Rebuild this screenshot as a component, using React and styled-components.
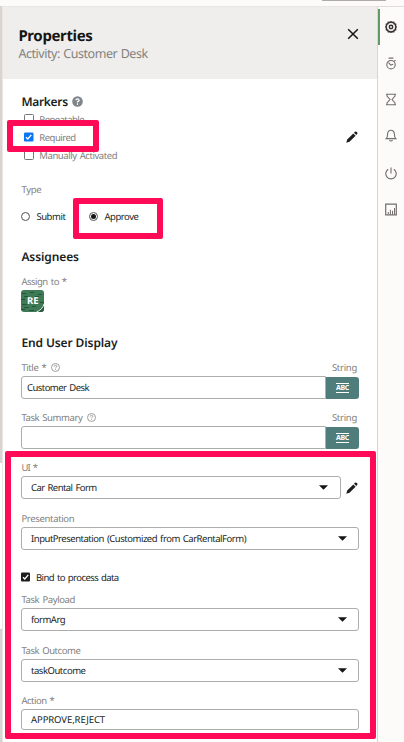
import React from "react";
import styled, { createGlobalStyle } from "styled-components";

const Global = createGlobalStyle`
  *, *::before, *::after { box-sizing: border-box; }
  body { margin: 0; overflow: hidden; background: #fcfbfa; }
  svg { display: block; flex: none; }
  button { font-family: inherit; }
`;

const Page = styled.div`
  position: relative;
  display: flex;
  flex-direction: column;
  width: 404px;
  height: 742px;
  overflow: hidden;
  font-family: "Noto Sans", sans-serif;
  font-size: 9.5px;
  color: #201e1c;
  text-rendering: geometricPrecision;
`;
const TopStrip = styled.div`
  display: flex;
  flex: none;
  height: 6px;
  padding-left: 322px;
  background: #fcfbfa;
`;
const TopLine = styled.div`
  width: 64px;
  height: 1px;
  background: #aeaba8;
`;
const Main = styled.div`
  display: flex;
  flex: 1;
  min-height: 0;
`;
const Gutter = styled.div`
  display: flex;
  flex-direction: column;
  flex: none;
  width: 3px;
  background: #d9d4d0;
  border-right: 1px solid #e9e6e4;
`;
const GutterGap = styled.div`
  height: 167px;
  margin-top: 457px;
  background: #fff;
  border-bottom: 1px solid #d0cdca;
`;
const Panel = styled.main`
  width: 374px;
  background: #fff;
`;
const Header = styled.header`
  display: flex;
  justify-content: space-between;
  height: 73px;
  padding: 20px 18px 0 15.4px;
  background: #efeeec;
  border-top: 1px solid #e8e6e3;
`;
const Title = styled.h1`
  margin: 0;
  font-size: 15px;
  font-weight: 700;
  line-height: 18px;
  letter-spacing: -0.37px;
  color: #161513;
`;
const Subtitle = styled.div`
  font-size: 12.5px;
  line-height: 18px;
  letter-spacing: -0.45px;
  word-spacing: 0.6px;
  color: #83817e;
`;
const CloseButton = styled.button`
  display: flex;
  width: 12px;
  height: 12px;
  margin: 1px 0 0;
  padding: 0;
  border: 0;
  background: none;
`;
const Form = styled.form`
  display: flex;
  flex-direction: column;
  padding: 13px 18px 0;
`;
const SectionTitle = styled.h2`
  display: flex;
  align-items: center;
  gap: 4px;
  height: 18px;
  margin: ${(p) => p.$top || 0}px 0 0;
  padding-left: 0.4px;
  font-size: 12px;
  font-weight: 600;
  letter-spacing: ${(p) => p.$track || 0}px;
  white-space: nowrap;
`;
const Label = styled.span`
  letter-spacing: ${(p) => p.$track || 0}px;
  word-spacing: 1px;
  color: ${(p) => (p.$dark ? "#201e1c" : "#82807d")};
  white-space: nowrap;
`;
const LabelRow = styled.div`
  display: flex;
  align-items: center;
  gap: 5px;
  height: 18px;
  margin-top: ${(p) => p.$top || 0}px;
  padding-left: 0.4px;
`;
const TypeName = styled(Label)`
  margin-left: auto;
  padding-right: 2px;
`;
const Markers = styled.div`
  display: flex;
  align-items: center;
  justify-content: space-between;
`;
const OptionRow = styled.div`
  display: flex;
  align-items: center;
  gap: ${(p) => p.$gap || 6}px;
  height: 18px;
  padding-left: ${(p) => p.$indent || 0}px;
  margin-top: ${(p) => p.$top || 0}px;
`;
const Radios = styled.div`
  display: flex;
  height: 20px;
  margin-top: 8px;
  padding-left: 0.4px;
`;
const RadioOption = styled.label`
  display: flex;
  align-items: center;
  gap: 6px;
  width: 68px;
`;
const Radio = styled.span`
  display: grid;
  place-items: center;
  width: 9px;
  height: 9px;
  border: 1px solid #55524f;
  border-radius: 50%;
  &::after {
    content: "";
    width: 5px;
    height: 5px;
    border-radius: 50%;
    background: ${(p) => (p.$on ? "#161513" : "transparent")};
  }
`;
const Avatar = styled.div`
  display: flex;
  width: 23px;
  height: 22px;
  border-radius: 3px;
  overflow: hidden;
`;
const FieldRow = styled.div`
  display: flex;
  align-items: center;
`;
const Box = styled.div`
  display: flex;
  align-items: center;
  justify-content: space-between;
  flex: none;
  width: ${(p) => p.$width || 338}px;
  height: ${(p) => p.$height || 23}px;
  padding: 0 ${(p) => p.$padRight || 11}px 1px ${(p) => p.$pad || 9}px;
  border: 1px solid #afadab;
  border-radius: ${(p) => (p.$joined ? "3px 0 0 3px" : "3px")};
  background: #fff;
`;
const AbcButton = styled.button`
  display: grid;
  place-items: center;
  width: 33px;
  height: 22px;
  padding: 0;
  border: 0;
  border-radius: 0 3px 3px 0;
  background: #4f7d7b;
`;
const AbcText = styled.span`
  border-top: 1px solid #fff;
  border-bottom: 1px solid #fff;
  color: #fff;
  font-size: 7px;
  font-weight: 700;
  line-height: 8px;
  letter-spacing: -0.35px;
`;
const PencilSlot = styled.span`
  margin-left: ${(p) => p.$left || 0}px;
  margin-right: ${(p) => p.$right || 0}px;
  margin-bottom: ${(p) => p.$bottom || 0}px;
`;
const Rail = styled.nav`
  display: flex;
  flex-direction: column;
  flex: none;
  width: 27px;
  padding-top: 2px;
  border-top: 1px solid #dfdcd9;
  border-left: 1px solid #d8d5d2;
  background: #fcfbfa;
`;
const RailItem = styled.button`
  display: flex;
  align-items: center;
  flex: none;
  height: 36px;
  margin-top: ${(p) => p.$gap || 0}px;
  padding: 0 0 0 ${(p) => (p.$active ? 5 : 7)}px;
  border: 0;
  border-left: ${(p) => (p.$active ? "2px solid #5f9b62" : "0")};
  background: none;
`;
const Highlight = styled.div`
  position: absolute;
  left: ${(p) => p.$x}px;
  top: ${(p) => p.$y}px;
  width: ${(p) => p.$w}px;
  height: ${(p) => p.$h}px;
  border: 6px solid #ff0a56;
  border-radius: 2px;
`;

const Pencil = () => (
  <svg width="12" height="12" viewBox="0 0 12 12" fill="#201e1c">
    <path d="M.3 11.7 1.2 8.5 7.3 2.4 9.6 4.7 3.5 10.8ZM8 1.7 8.9.8Q9.8.1 10.9 1.1T11.2 3.1L10.3 4Z" />
  </svg>
);
const Help = ({ solid }) =>
  solid ? (
    <svg width="11" height="11" viewBox="0 0 11 11">
      <circle cx="5.5" cy="5.5" r="5.3" fill="#7f858b" />
      <path d="M3.9 4.2Q4 2.8 5.5 2.8T7.1 4.2Q7.1 4.9 6.2 5.3T5.5 6.5" fill="none" stroke="#fff" strokeWidth="1.3" />
      <circle cx="5.5" cy="8.1" r=".8" fill="#fff" />
    </svg>
  ) : (
    <svg width="9" height="9" viewBox="0 0 9 9" fill="none" stroke="#898683" strokeWidth=".8">
      <circle cx="4.5" cy="4.5" r="4" />
      <path d="M3.2 3.6Q3.3 2.4 4.5 2.4T5.8 3.5Q5.8 4.1 5.1 4.4T4.5 5.3M4.5 6V6.8" />
    </svg>
  );
const Check = ({ state }) => (
  <svg width={state === "dark" ? 9 : 10} height="10" viewBox={state === "dark" ? "0 0 9 10" : "0 0 10 10"}>
    {state === "off" && <rect x=".5" y=".5" width="9" height="9" rx="1" fill="#fff" stroke="#767676" />}
    {state === "blue" && <rect y=".5" width="9.5" height="9" rx="1.3" fill="#0b76f0" />}
    {state === "dark" && <rect y=".5" width="9" height="9" rx="1" fill="#201e1c" />}
    {state !== "off" && <path d="M2 5.2 3.8 7 7.3 2.9" fill="none" stroke="#fff" strokeWidth="1.3" />}
  </svg>
);
const Caret = () => (
  <svg width="9" height="5" viewBox="0 0 9 5"><path d="M0 .3H9L4.5 4.8Z" fill="#161513" /></svg>
);
const railSvg = { width: 12, height: 13, viewBox: "0 0 12 13", fill: "none", stroke: "#716e6b", strokeWidth: 1.1 };
const railIcons = [
  <svg key="gear" width="12" height="12" viewBox="0 0 12 12" fill="none" stroke="#34312f">
    <path d="M4.8 1.5 6 .8 7.2 1.5 8.7 1.4 9.2 2.8 10.6 3.3 10.5 4.8 11.2 6 10.5 7.2 10.6 8.7 9.2 9.2 8.7 10.6 7.2 10.5 6 11.2 4.8 10.5 3.3 10.6 2.8 9.2 1.4 8.7 1.5 7.2 .8 6 1.5 4.8 1.4 3.3 2.8 2.8 3.3 1.4Z" strokeWidth="1.5" />
    <circle cx="6" cy="6" r="1.7" strokeWidth="1.5" />
  </svg>,
  <svg key="timer" {...railSvg}>
    <path d="M3.6 1.1H8.4M9 4.4 10.6 3.1M3.6 5.7 5.8 8.1 8.2 7.3" />
    <circle cx="6" cy="7.7" r="4.2" />
  </svg>,
  <svg key="hourglass" {...railSvg}>
    <path d="M1 1.2H11M1 11.8H11M2 1.5V3L5 6.5 2 10V11.5M10 1.5V3L7 6.5 10 10V11.5" />
  </svg>,
  <svg key="bell" {...railSvg}>
    <path d="M1.2 9.6Q2.6 8.3 2.6 5.3C2.6 -.2 9.4 -.2 9.4 5.3Q9.4 8.3 10.8 9.6ZM4.4 11.2Q6 12.8 7.6 11.2" />
  </svg>,
  <svg key="power" {...railSvg}>
    <path d="M6 .5V6.5M3.2 2.3A5.2 5.2 0 1 0 8.8 2.3" />
  </svg>,
  <svg key="chart" {...railSvg}>
    <path d="M.7 1.1H11.3V11.9H.7Z" strokeWidth="1.2" />
    <path d="M3.3 11.5V9M5.4 11.5V6.8M7.5 11.5V7.8M9.5 11.5V5" strokeWidth="1" />
  </svg>,
];

const HelpedLabel = ({ text, track, top }) => (
  <LabelRow $top={top}>
    <Label $track={track}>{text}</Label>
    <Help />
    <TypeName $track={-0.28}>String</TypeName>
  </LabelRow>
);
const TextField = ({ value }) => (
  <FieldRow>
    <Box $width={305} $pad={5} $joined>
      <Label $dark $track={-0.55}>{value}</Label>
    </Box>
    <AbcButton type="button"><AbcText>ABC</AbcText></AbcButton>
  </FieldRow>
);
const Select = ({ label, labelTrack, value, track, top, width, padRight, children }) => (
  <>
    <LabelRow $top={top}><Label $track={labelTrack}>{label}</Label></LabelRow>
    <FieldRow>
      <Box $width={width} $padRight={padRight}>
        <Label $dark $track={track}>{value}</Label>
        <Caret />
      </Box>
      {children}
    </FieldRow>
  </>
);

export default function App() {
  return (
    <Page>
      <Global />
      <TopStrip><TopLine /></TopStrip>
      <Main>
        <Gutter><GutterGap /></Gutter>
        <Panel>
          <Header>
            <div>
              <Title>Properties</Title>
              <Subtitle>Activity: Customer Desk</Subtitle>
            </div>
            <CloseButton aria-label="Close">
              <svg width="12" height="12" viewBox="0 0 12 12" stroke="#161513" strokeWidth="1.5">
                <path d="M1.2 1.2 10.8 10.8M10.8 1.2 1.2 10.8" />
              </svg>
            </CloseButton>
          </Header>
          <Form>
            <SectionTitle $track={-0.3}>Markers<Help solid /></SectionTitle>
            <Markers>
              <div>
                <OptionRow $indent={3} $gap={5.3}><Check state="off" /><Label $track={-0.55}>Repeatable</Label></OptionRow>
                <OptionRow $indent={3} $gap={5.3}><Check state="blue" /><Label $track={-0.5}>Required</Label></OptionRow>
                <OptionRow $indent={3} $gap={5.3}><Check state="off" /><Label $track={-0.43}>Manually Activated</Label></OptionRow>
              </div>
              <PencilSlot $right={1} $bottom={1}><Pencil /></PencilSlot>
            </Markers>
            <LabelRow $top={16}><Label $track={-0.27}>Type</Label></LabelRow>
            <Radios>
              <RadioOption><Radio /><Label $dark $track={-0.45}>Submit</Label></RadioOption>
              <RadioOption><Radio $on /><Label $dark $track={-0.46}>Approve</Label></RadioOption>
            </Radios>
            <SectionTitle $top={21} $track={-0.1}>Assignees</SectionTitle>
            <LabelRow $top={7}><Label $track={-0.5}>Assign to *</Label></LabelRow>
            <Avatar>
              <svg width="23" height="22" viewBox="0 0 23 22">
                <rect width="23" height="22" fill="#3d7a55" />
                <path d="M1 3.5H5M9 2.5H13M17 4.5H21M3 6.5H7M14 6.5H18M0 9.5H4M1 14.5H6M11 16.5H15M3 17.5H8M0 19.5H4M8 20.5H13M19 12.5H23" stroke="#23513a" strokeWidth=".9" />
                <path d="M23 14Q21.5 19.5 15.5 22H23Z" fill="#2c5d43" />
                <path d="M23 14Q21.5 19.5 15.5 22" fill="none" stroke="#e6efe8" />
                <text x="11.7" y="14" textAnchor="middle" fill="#fff" fontSize="9.5" fontWeight="700" letterSpacing="-.2">RE</text>
              </svg>
            </Avatar>
            <SectionTitle $top={21} $track={-0.11}>End User Display</SectionTitle>
            <HelpedLabel text="Title *" track={-0.4} top={7} />
            <TextField value="Customer Desk" />
            <HelpedLabel text="Task Summary" track={-0.41} top={9} />
            <TextField value="" />
            <Select label="UI *" labelTrack={-0.8} value="Car Rental Form" track={-0.56} top={9} width={320} padRight={12}>
              <PencilSlot $left={5}><Pencil /></PencilSlot>
            </Select>
            <Select label="Presentation" labelTrack={-0.33} value="InputPresentation (Customized from CarRentalForm)" track={-0.48} top={10} />
            <OptionRow $top={18}><Check state="dark" /><Label $dark $track={-0.58}>Bind to process data</Label></OptionRow>
            <Select label="Task Payload" labelTrack={-0.39} value="formArg" track={-0.5} top={4} />
            <Select label="Task Outcome" labelTrack={-0.43} value="taskOutcome" track={-0.47} top={10} />
            <LabelRow $top={9}><Label $track={-0.5}>Action *</Label></LabelRow>
            <Box $height={21}><Label $dark $track={-0.09}>APPROVE,REJECT</Label></Box>
          </Form>
        </Panel>
        <Rail>
          {railIcons.map((icon, i) => (
            <RailItem key={icon.key} $active={i === 0} $gap={icon.key === "power" ? 2 : 0}>{icon}</RailItem>
          ))}
        </Rail>
      </Main>
      <Highlight $x={7} $y={120} $w={92} $h={32} />
      <Highlight $x={73} $y={198} $w={90} $h={41} />
      <Highlight $x={5} $y={451} $w={371} $h={288} />
    </Page>
  );
}
